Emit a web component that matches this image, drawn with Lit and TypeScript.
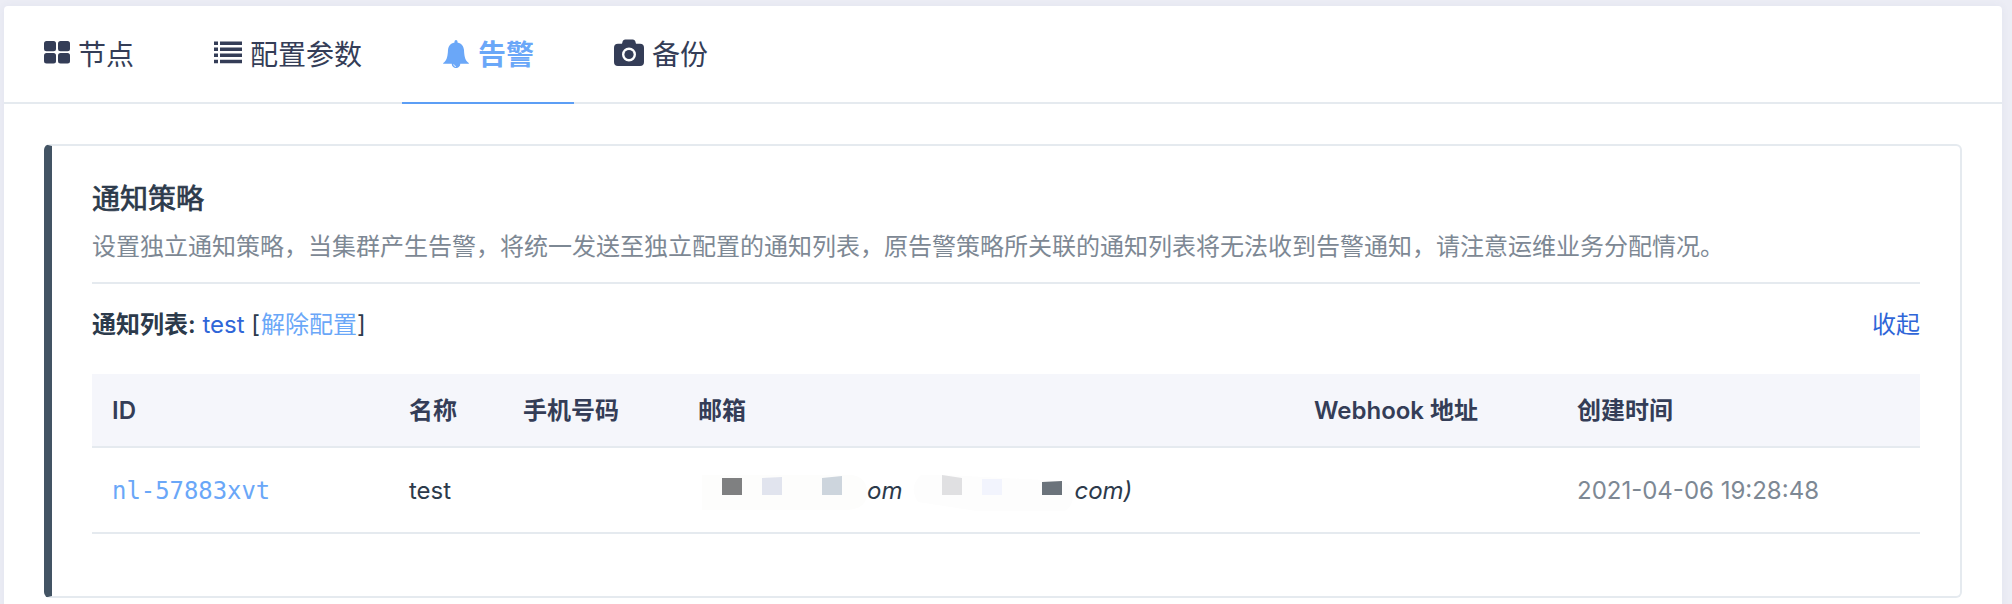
import { LitElement, html, css, svg } from "lit";
import { customElement } from "lit/decorators.js";

const icons = {
  grid: svg`<svg width="26" height="23" viewBox="0 0 26 23"><rect width="12" height="10.3" rx="2.5"/><rect x="14" width="12" height="10.3" rx="2.5"/><rect y="12" width="12" height="10.5" rx="2.5"/><rect x="14" y="12" width="12" height="10.5" rx="2.5"/></svg>`,
  list: svg`<svg width="28" height="23" viewBox="0 0 28 23"><path d="M0 .5h4v3.5H0zM6 .5h22v3.500H6zM0 6.500h4V10H0zM6 6.500h22V10H6zM0 12.500h4V16H0zM6 12.500h22V16H6zM0 18.700h4v3.500H0zM6 18.700h22v3.500H6z"/></svg>`,
  bell: svg`<svg width="26" height="28" viewBox="0 0 26 28"><path d="M11.5 1.6a1.5 1.5 0 0 1 3 0v.8C18.700 3.100 20.700 6.500 21 10c.3 6 1 9.700 3.500 11.900 1 .9 1.500 1.400 1.500 1.900H17.300a4.300 4.300 0 0 1-8.600 0H0c0-.5.500-1 1.500-1.900C4 19.700 4.700 16 5 10c.3-3.500 2.300-6.900 6.500-7.600z"/><path d="M10.700 24.300a2.300 2.300 0 0 0 2.300 2.200" fill="none" stroke="#fff" stroke-width=".8"/></svg>`,
  camera: svg`<svg width="30" height="27" viewBox="0 0 30 27"><path fill-rule="evenodd" d="M4 4.800h3.300c.8 0 .9-.5 1.100-1.500C8.800 1.200 9.700.4 11.300.4h7.400c1.600 0 2.500.8 2.900 2.900.2 1 .3 1.500 1.100 1.500H26a4 4 0 0 1 4 4V23a4 4 0 0 1-4 4H4a4 4 0 0 1-4-4V8.800a4 4 0 0 1 4-4zM15 8.500a7 7 0 1 0 0 14 7 7 0 0 0 0-14z"/><circle cx="15" cy="15.500" r="4.600"/></svg>`,
};

@customElement("app-root")
export class AppRoot extends LitElement {
  static styles = css`
    :host { display: block; box-sizing: border-box; height: 604px; overflow: hidden; padding: 6px 10px 0 4px; background: #ecedf5;
      font: 24px/36px Inter, "Noto Sans CJK SC", sans-serif; color: #2c3a4b; }
    * { box-sizing: border-box; }
    .card { height: 620px; background: #fff; border-radius: 4px; box-shadow: 0 0 8px rgba(60, 90, 130, .06); }
    .tabs { display: flex; height: 98px; border-bottom: 2px solid #e5eaef; }
    .tab { display: flex; align-items: center; height: 98px; padding: 2px 40px 0; border-bottom: 2px solid transparent; font-size: 28px; line-height: 40px; color: #343d57; white-space: nowrap; }
    .tab.active { color: #6aa7f8; border-color: #5c9ef5; font-weight: 600; }
    .icon { display: flex; align-items: center; height: 30px; margin: -6px 8px 0 0; }
    .active .icon { margin: -3px 9px 0 1px; }
    .icon svg { fill: currentColor; display: block; }
    .panel { margin: 40px 40px 0; height: 454px; border: 2px solid #e5eaef; border-left: 8px solid #435464; border-radius: 6px; padding: 32px 40px 0; }
    .title { margin: 0; font-size: 28px; line-height: 42px; font-weight: 400; -webkit-text-stroke: .7px currentColor; }
    .desc { margin: 8px 0 0; height: 56px; line-height: 37px; color: #7d8894; border-bottom: 2px solid #e5eaef; white-space: nowrap; }
    .row { display: flex; justify-content: space-between; margin-top: 23px; height: 35px; }
    .strong { font-weight: 600; }
    .link { color: #2f66d8; }
    .light { color: #6aa7f8; margin-left: 1px; }
    table { width: 1828px; margin-top: 32px; border-collapse: separate; border-spacing: 0; table-layout: fixed; }
    th, td { padding: 2px 0 0 20px; text-align: left; border-bottom: 2px solid #e5eaef; white-space: nowrap; }
    th { height: 74px; background: #f5f6fb; color: #343d57; font-weight: 600; }
    td { height: 86px; }
    .c1 { width: 297px; } .c2 { width: 114px; } .c3 { width: 175px; } .c4 { width: 616px; } .c5 { width: 263px; }
    .id { font-family: "DejaVu Sans Mono", monospace; font-size: 23.9px; color: #6aa7f8; }
    .time { color: #7d8894; }
    .mail { display: flex; align-items: center; font-style: italic; }
    .mask { width: 165px; height: 40px; margin-left: 4px; flex: none; }
    .mask.second { margin-left: 11px; width: 161px; }
  `;

  render() {
    return html`<div class="card">
      <nav class="tabs">
        <div class="tab"><span class="icon">${icons.grid}</span>节点</div>
        <div class="tab"><span class="icon">${icons.list}</span>配置参数</div>
        <div class="tab active"><span class="icon">${icons.bell}</span>告警</div>
        <div class="tab"><span class="icon">${icons.camera}</span>备份</div>
      </nav>
      <section class="panel">
        <h2 class="title">通知策略</h2>
        <p class="desc">设置独立通知策略，当集群产生告警，将统一发送至独立配置的通知列表，原告警策略所关联的通知列表将无法收到告警通知，请注意运维业务分配情况。</p>
        <div class="row">
          <div><span class="strong">通知列表:</span> <span class="link">test</span> [<span class="light">解除配置</span>]</div>
          <span class="link">收起</span>
        </div>
        <table>
          <thead><tr><th class="c1">ID</th><th class="c2">名称</th><th class="c3">手机号码</th><th class="c4">邮箱</th><th class="c5">Webhook 地址</th><th>创建时间</th></tr></thead>
          <tbody><tr>
            <td class="id">nl-57883xvt</td><td>test</td><td></td>
            <td><div class="mail">
              <svg class="mask" viewBox="0 -2 165 40"><path d="M0 2h150q15 2 15 18t-20 17H0z" fill="#fdfdfc"/><path d="M20 5h20v17H20z" fill="#7f8081"/><path d="M60 5l20-1v18H60z" fill="#e1e4ee"/><path d="M120 5l20-2v19h-20z" fill="#cdd5dd"/></svg>
              <span>om</span>
              <svg class="mask second" viewBox="0 -2 161 40"><path d="M8 2l25 0 117 6q10 4 10 15t-10 16H70L5 29Q-5 14 8 2z" fill="#fdfdfd"/><path d="M29 2l20 3v17H29z" fill="#e0e0e2"/><path d="M69 6h20v16H69z" fill="#f2f4fd"/><path d="M129 9l20-1v14h-20z" fill="#6b737b"/></svg>
              <span>com)</span>
            </div></td>
            <td></td><td class="time">2021-04-06 19:28:48</td>
          </tr></tbody>
        </table>
      </section>
    </div>`;
  }
}
